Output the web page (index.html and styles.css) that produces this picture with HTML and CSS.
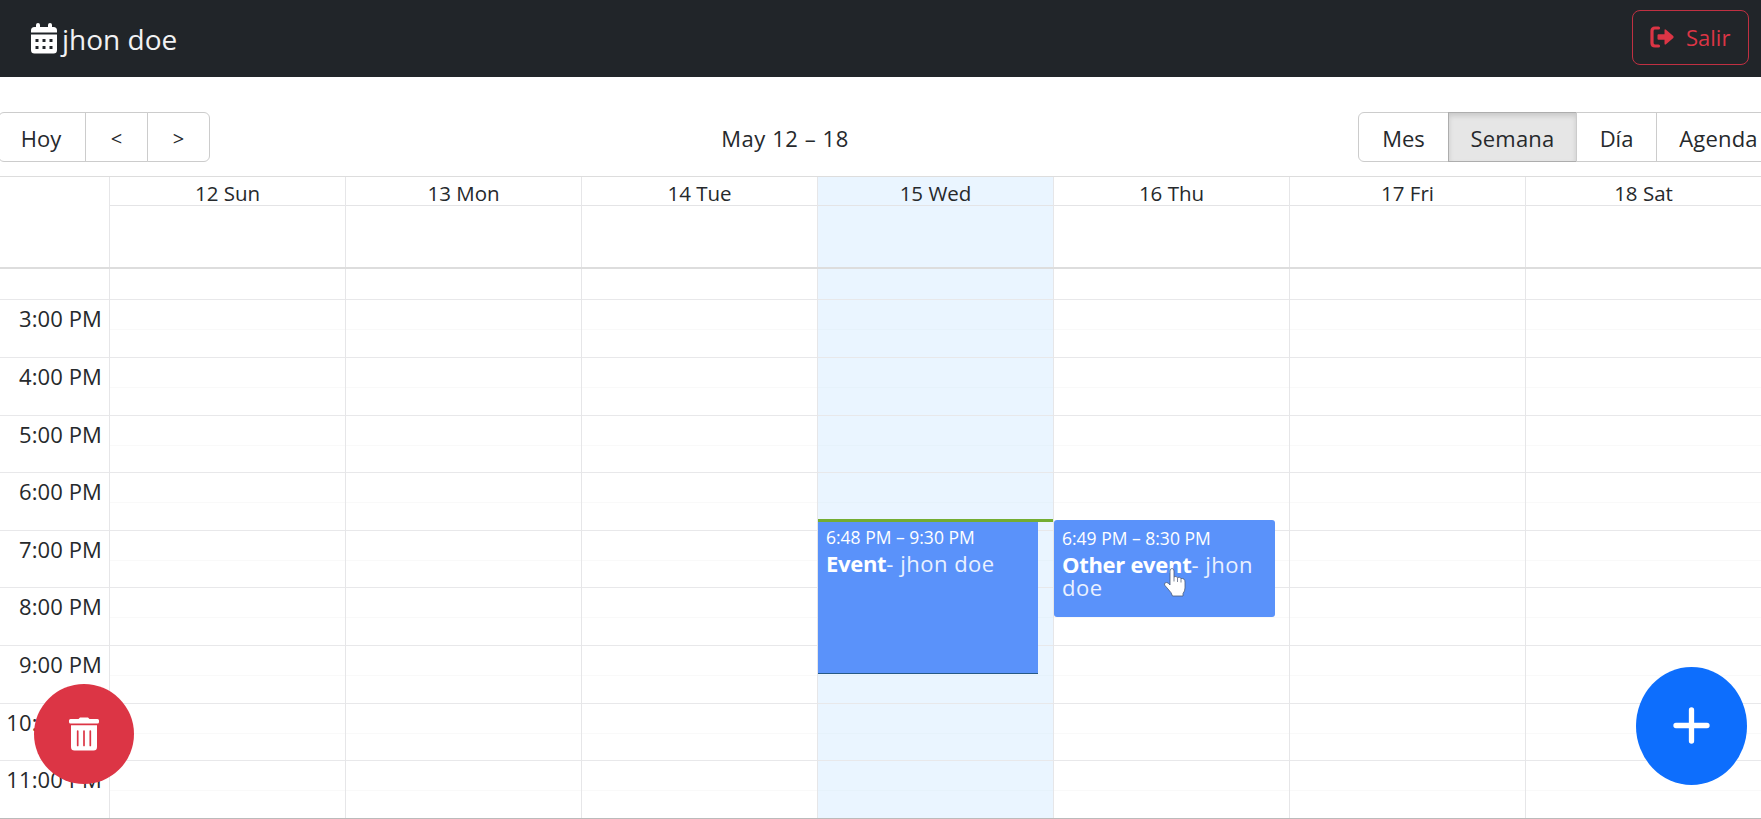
FILE: index.html
```html
<!DOCTYPE html>
<html lang="es">
<head>
<meta charset="utf-8">
<title>Calendar</title>
<link rel="stylesheet" href="styles.css">
</head>
<body>
<div class="app">
  <header class="navbar">
    <div class="brand">
      <svg class="brand-icon" viewBox="0 0 26 31"><path fill="#fff" fill-rule="evenodd" d="M0 9.500V7.500Q0 4 3.500 4H5V2Q5 0 7 0T9 2V4H17V2Q17 0 19 0T21 2V4H22.500Q26 4 26 7.500V9.500ZM0 11.500H26V27Q26 30.500 22.500 30.500H3.500Q0 30.500 0 27ZM4.500 16V19H7.500V16ZM11.500 16V19H14.500V16ZM18.500 16V19H21.500V16ZM4.500 23V26H7.500V23ZM11.500 23V26H14.500V23ZM18.500 23V26H21.500V23Z"/></svg>
      <span>jhon doe</span>
    </div>
    <button class="logout">
      <svg class="logout-icon" viewBox="0 0 24 22"><path d="M8.500 2H5Q2 2 2 5V17Q2 20 5 20H8.500" fill="none" stroke="#dc3545" stroke-width="3.200" stroke-linecap="round"/><path d="M8.500 8.300H14.500V4.400Q14.500 2.700 16 3.800L23.300 10Q24 11 23.300 12L16 18.200Q14.500 19.300 14.500 17.600V13.700H8.500Q7.500 13.700 7.500 12.700V9.300Q7.500 8.300 8.500 8.300Z" fill="#dc3545"/></svg>
      <span>Salir</span>
    </button>
  </header>

  <div class="toolbar">
    <div class="group">
      <button class="btn today-btn">Hoy</button><button class="btn step">&lt;</button><button class="btn step">&gt;</button>
    </div>
    <span class="range">May 12 – 18</span>
    <div class="group views">
      <button class="btn month">Mes</button><button class="btn week active">Semana</button><button class="btn day-btn">Día</button><button class="btn agenda">Agenda</button>
    </div>
  </div>

  <main class="calendar">
    <div class="cal-head">
      <div class="gutter"></div>
      <div class="head-col"><div class="head-day">12 Sun</div></div>
      <div class="head-col"><div class="head-day">13 Mon</div></div>
      <div class="head-col"><div class="head-day">14 Tue</div></div>
      <div class="head-col today"><div class="head-day">15 Wed</div></div>
      <div class="head-col"><div class="head-day">16 Thu</div></div>
      <div class="head-col"><div class="head-day">17 Fri</div></div>
      <div class="head-col"><div class="head-day">18 Sat</div></div>
    </div>
    <div class="cal-body">
      <div class="gutter">
        <div class="slot first"></div>
        <div class="slot">3:00 PM</div><div class="slot">4:00 PM</div><div class="slot">5:00 PM</div>
        <div class="slot">6:00 PM</div><div class="slot">7:00 PM</div><div class="slot">8:00 PM</div>
        <div class="slot">9:00 PM</div><div class="slot">10:00 PM</div><div class="slot">11:00 PM</div>
      </div>
      <div class="day"><div class="slot first"></div><div class="slot"></div><div class="slot"></div><div class="slot"></div><div class="slot"></div><div class="slot"></div><div class="slot"></div><div class="slot"></div><div class="slot"></div><div class="slot"></div></div>
      <div class="day"><div class="slot first"></div><div class="slot"></div><div class="slot"></div><div class="slot"></div><div class="slot"></div><div class="slot"></div><div class="slot"></div><div class="slot"></div><div class="slot"></div><div class="slot"></div></div>
      <div class="day"><div class="slot first"></div><div class="slot"></div><div class="slot"></div><div class="slot"></div><div class="slot"></div><div class="slot"></div><div class="slot"></div><div class="slot"></div><div class="slot"></div><div class="slot"></div></div>
      <div class="day today"><div class="slot first"></div><div class="slot"></div><div class="slot"></div><div class="slot"></div><div class="slot"></div><div class="slot"></div><div class="slot"></div><div class="slot"></div><div class="slot"></div><div class="slot"></div>
        <div class="event ongoing">
          <div class="event-time">6:48 PM – 9:30 PM</div>
          <div class="event-title"><strong>Event</strong><span>- jhon doe</span></div>
        </div>
        <div class="now"></div>
      </div>
      <div class="day"><div class="slot first"></div><div class="slot"></div><div class="slot"></div><div class="slot"></div><div class="slot"></div><div class="slot"></div><div class="slot"></div><div class="slot"></div><div class="slot"></div><div class="slot"></div>
        <div class="event other">
          <div class="event-time">6:49 PM – 8:30 PM</div>
          <div class="event-title"><strong>Other event</strong><span>- jhon<br>doe</span></div>
          <svg class="cursor" viewBox="0 0 24 32"><path d="M7 16V4Q7 1.500 9 1.500T11 4V10Q13 8.500 14.500 10.500Q16.500 9.500 18 11.500Q22 11 22 15V21Q22 24 20 26.500V29H9.500Q8.500 25.500 5 22L1.500 18Q1 15.500 3.500 15.500Q5.500 15.500 7 18Z" fill="#fff" stroke="#4a5a78" stroke-width=".8"/><path d="M11 10V14.500M14.500 11V15M18 12V15.500" stroke="#7d8698" stroke-width="1"/></svg>
        </div>
      </div>
      <div class="day"><div class="slot first"></div><div class="slot"></div><div class="slot"></div><div class="slot"></div><div class="slot"></div><div class="slot"></div><div class="slot"></div><div class="slot"></div><div class="slot"></div><div class="slot"></div></div>
      <div class="day"><div class="slot first"></div><div class="slot"></div><div class="slot"></div><div class="slot"></div><div class="slot"></div><div class="slot"></div><div class="slot"></div><div class="slot"></div><div class="slot"></div><div class="slot"></div></div>
    </div>
  </main>

  <button class="fab delete" aria-label="Delete">
    <svg class="trash" viewBox="0 0 30 34"><path fill="#fff" d="M1.500 2H9.500L11 .5H19L20.500 2H28.500Q30 2 30 3.500V5Q30 6.500 28.500 6.500H1.500Q0 6.500 0 5V3.500Q0 2 1.500 2ZM2 8.300H28V30Q28 33.500 24.500 33.500H5.500Q2 33.500 2 30Z"/><path d="M8.700 14V28.500M15 14V28.500M21.300 14V28.500" stroke="#dc3545" stroke-width="1.700" stroke-linecap="round"/></svg>
  </button>
  <button class="fab add" aria-label="Add">
    <svg class="plus" viewBox="0 0 37 37"><path d="M18.500 3V34M3 18.500H34" stroke="#fff" stroke-width="5.300" stroke-linecap="round"/></svg>
  </button>
</div>
</body>
</html>
```

FILE: styles.css
```css
* { box-sizing: border-box; }
body {
  margin: 0;
  overflow: hidden;
  background: #fff;
  color: #26292c;
  font-family: "Open Sans", "Noto Sans", sans-serif;
  font-size: 22px;
  font-weight: 370;
}
button { font: inherit; color: inherit; margin: 0; }
svg { display: block; flex: none; }

.app {
  position: relative;
  width: 1761px;
  height: 819px;
  display: flex;
  flex-direction: column;
  overflow: hidden;
}

.navbar {
  height: 77px;
  flex: none;
  display: flex;
  align-items: center;
  justify-content: space-between;
  padding: 0 12px 3px 31px;
  background: #212529;
}
.brand {
  display: flex;
  align-items: center;
  gap: 5px;
  padding-top: 3px;
  color: #f1f2f3;
  font-size: 28px;
  font-weight: 400;
  line-height: 40px;
}
.brand-icon { width: 26px; height: 31px; }
.logout {
  width: 117px;
  height: 55px;
  display: flex;
  align-items: center;
  gap: 12px;
  padding: 0 0 0 17px;
  border: 1px solid #c03042;
  border-radius: 8px;
  background: none;
  color: #dc3545;
  font-weight: 400;
}
.logout-icon { width: 24px; height: 22px; }

.toolbar {
  height: 99px;
  flex: none;
  display: grid;
  grid-template-columns: 210px 1fr 403px;
  align-items: center;
  padding-top: 22px;
  padding-bottom: 2px;
}
.group { display: flex; height: 50px; margin-left: -2px; }
.btn {
  flex: none;
  height: 50px;
  padding: 2px 0 0;
  border: 1px solid #ccc;
  background: #fff;
  white-space: nowrap;
}
.btn + .btn { margin-left: -1px; }
.btn:first-child { border-radius: 6px 0 0 6px; }
.step:last-child { border-radius: 0 6px 6px 0; }
.today-btn { width: 88px; padding-right: 2px; }
.step { width: 63px; padding-top: 4px; font-size: 20px; }
.views { margin-left: 0; }
.month { width: 91px; }
.week { width: 129px; letter-spacing: .2px; }
.day-btn { width: 81px; }
.agenda { width: 125px; letter-spacing: .2px; }
.active {
  background: #e6e6e6;
  border-color: #adadad;
  box-shadow: inset 0 3px 5px rgba(0, 0, 0, .125);
}
.range { justify-self: center; margin-right: -2px; padding-top: 2px; letter-spacing: .55px; }

.calendar {
  flex: 1;
  min-height: 0;
  display: flex;
  flex-direction: column;
  border-top: 1px solid #ddd;
  border-bottom: 1px solid #bbb;
}
.cal-head {
  display: grid;
  grid-template-columns: 109px repeat(7, 236px);
  height: 92px;
  flex: none;
  border-bottom: 2px solid #ddd;
}
.head-col { border-left: 1px solid #e6e6e8; }
.head-day {
  height: 29px;
  border-bottom: 1px solid #e4e4e6;
  text-align: center;
  font-size: 20.500px;
  line-height: 33px;
}
.today { background: #eaf5ff; }

.cal-body {
  display: grid;
  grid-template-columns: 109px repeat(7, 236px);
  flex: 1;
  min-height: 0;
  overflow: hidden;
}
.day { position: relative; border-left: 1px solid #e6e6e8; }
.slot {
  height: 57.600px;
  border-bottom: 1px solid #e8e8ea;
  padding-right: 7px;
  text-align: right;
  line-height: 36px;
  letter-spacing: .1px;
  white-space: nowrap;
}
.day .slot { background: linear-gradient(#f9f9f9, #f9f9f9) 0 29px / 100% 1px no-repeat; }
.day.today .slot { background: linear-gradient(#e6f2fb, #e6f2fb) 0 29px / 100% 1px no-repeat; }
.slot.first { height: 31.400px; }
.day .slot.first { background: none; }

.event {
  position: absolute;
  left: 0;
  width: 221px;
  padding: 5px 8px;
  background: #5a92fa;
  color: #fff;
  font-weight: 400;
}
.ongoing { top: 251px; height: 154px; width: 220px; border-bottom: 1px solid #265985; }
.other { top: 251px; height: 97px; padding-top: 6px; border-radius: 3px; }
.event-time { font-size: 17.500px; line-height: 25px; white-space: nowrap; }
.event-title { font-size: 22px; line-height: 23px; margin-top: 2px; white-space: nowrap; }
.event-title strong { letter-spacing: -.3px; }
.event-title span { color: #eaf1ff; letter-spacing: .5px; }
.now { position: absolute; top: 250px; left: 0; right: 0; height: 3px; background: #74ad31; }
.cursor { position: absolute; left: 109px; top: 47px; width: 24px; height: 32px; }

.fab {
  position: absolute;
  display: flex;
  align-items: center;
  justify-content: center;
  padding: 0;
  border: 0;
  border-radius: 50%;
}
.delete { left: 34px; top: 684px; width: 100px; height: 100px; background: #dc3545; }
.trash { width: 30px; height: 34px; }
.add { left: 1636px; top: 667px; width: 111px; height: 118px; padding-bottom: 2px; background: #0d6efd; }
.plus { width: 37px; height: 37px; }
```
